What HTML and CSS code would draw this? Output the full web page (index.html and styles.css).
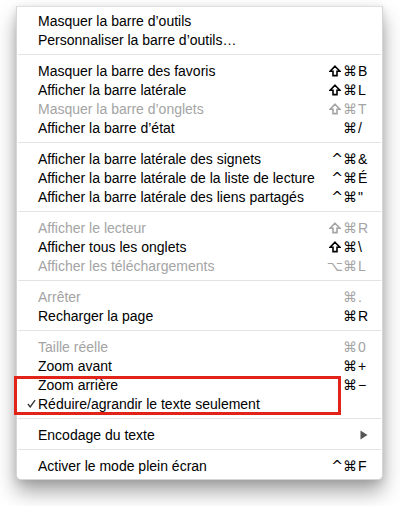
FILE: index.html
```html
<!DOCTYPE html>
<html lang="fr">
<head>
    <meta charset="UTF-8">
    <meta name="viewport" content="width=device-width, initial-scale=1.0">
    <title>Présentation</title>
    <link rel="stylesheet" href="styles.css">
</head>
<body>

<div class="menu">
    <div class="item"><span class="label">Masquer la barre d’outils</span></div>
    <div class="item"><span class="label">Personnaliser la barre d’outils…</span></div>
    <div class="sep"></div>

    <div class="item"><span class="label">Masquer la barre des favoris</span><span class="keys"><svg class="shift" viewBox="0 0 12 12"><path d="M6 1.2 L10.8 6.2 H8 V10.6 H4 V6.2 H1.2 Z"/></svg><span class="mods">⌘</span><span class="key">B</span></span></div>
    <div class="item"><span class="label">Afficher la barre latérale</span><span class="keys"><svg class="shift" viewBox="0 0 12 12"><path d="M6 1.2 L10.8 6.2 H8 V10.6 H4 V6.2 H1.2 Z"/></svg><span class="mods">⌘</span><span class="key">L</span></span></div>
    <div class="item off"><span class="label">Masquer la barre d’onglets</span><span class="keys"><svg class="shift" viewBox="0 0 12 12"><path d="M6 1.2 L10.8 6.2 H8 V10.6 H4 V6.2 H1.2 Z"/></svg><span class="mods">⌘</span><span class="key">T</span></span></div>
    <div class="item"><span class="label">Afficher la barre d’état</span><span class="keys"><span class="mods">⌘</span><span class="key">/</span></span></div>
    <div class="sep"></div>

    <div class="item"><span class="label">Afficher la barre latérale des signets</span><span class="keys"><span class="mods">^⌘</span><span class="key">&amp;</span></span></div>
    <div class="item"><span class="label">Afficher la barre latérale de la liste de lecture</span><span class="keys"><span class="mods">^⌘</span><span class="key">É</span></span></div>
    <div class="item"><span class="label">Afficher la barre latérale des liens partagés</span><span class="keys"><span class="mods">^⌘</span><span class="key">"</span></span></div>
    <div class="sep"></div>

    <div class="item off"><span class="label">Afficher le lecteur</span><span class="keys"><svg class="shift" viewBox="0 0 12 12"><path d="M6 1.2 L10.8 6.2 H8 V10.6 H4 V6.2 H1.2 Z"/></svg><span class="mods">⌘</span><span class="key">R</span></span></div>
    <div class="item"><span class="label">Afficher tous les onglets</span><span class="keys"><svg class="shift" viewBox="0 0 12 12"><path d="M6 1.2 L10.8 6.2 H8 V10.6 H4 V6.2 H1.2 Z"/></svg><span class="mods">⌘</span><span class="key">\</span></span></div>
    <div class="item off"><span class="label">Afficher les téléchargements</span><span class="keys"><span class="mods">⌥⌘</span><span class="key">L</span></span></div>
    <div class="sep"></div>

    <div class="item off"><span class="label">Arrêter</span><span class="keys"><span class="mods">⌘</span><span class="key">.</span></span></div>
    <div class="item"><span class="label">Recharger la page</span><span class="keys"><span class="mods">⌘</span><span class="key">R</span></span></div>
    <div class="sep"></div>

    <div class="item off"><span class="label">Taille réelle</span><span class="keys"><span class="mods">⌘</span><span class="key">0</span></span></div>
    <div class="item"><span class="label">Zoom avant</span><span class="keys"><span class="mods">⌘</span><span class="key">+</span></span></div>
    <div class="item"><span class="label">Zoom arrière</span><span class="keys"><span class="mods">⌘</span><span class="key">−</span></span></div>
    <div class="item"><svg class="check" viewBox="0 0 10 10"><path d="M1 5.6 L3.6 8.8 L9 1.2"/></svg><span class="label">Réduire/agrandir le texte seulement</span></div>
    <div class="sep"></div>

    <div class="item"><span class="label">Encodage du texte</span><svg class="arrow" viewBox="0 0 8 10"><path d="M0.5 0.5 L7.5 5 L0.5 9.5 Z"/></svg></div>
    <div class="sep"></div>

    <div class="item"><span class="label">Activer le mode plein écran</span><span class="keys"><span class="mods">^⌘</span><span class="key">F</span></span></div>

    <div class="highlight"></div>
</div>

</body>
</html>
```

FILE: styles.css
```css
html, body {
    height: 100%;
}
body {
    font-family: "Liberation Sans", Arial, "DejaVu Sans", sans-serif;
    background-color: white;
    color: black;
    margin: 0px;
    padding: 0px;
    overflow: hidden;
}
div.menu {
    position: relative;
    width: 365px;
    margin: 6px 0 0 16px;
    padding: 4px 0 4px 0;
    background-color: white;
    border: 1px solid #d6d6d6;
    border-top-color: #e0e0e0;
    border-radius: 0 0 5px 5px;
    box-shadow: 0 12px 20px rgba(0, 0, 0, 0.35), 0 2px 8px rgba(0, 0, 0, 0.12);
}
div.item {
    position: relative;
    display: flex;
    align-items: center;
    height: 19px;
    padding: 0 13px 0 21px;
    font-size: 14px;
    white-space: nowrap;
}
div.item.off {
    color: #a4a4a4;
}
.label {
    flex: 1;
}
.keys {
    display: flex;
    align-items: center;
    font-family: "DejaVu Sans", sans-serif;
    font-size: 14px;
}
.shift {
    width: 12px;
    height: 12px;
    margin-right: 2px;
    fill: none;
    stroke: currentColor;
    stroke-width: 1.6;
    stroke-linejoin: miter;
}
.mods {
    text-align: right;
}
.key {
    width: 11px;
    padding-left: 1px;
    font-family: "Liberation Sans", Arial, sans-serif;
    font-size: 14px;
}
.check {
    position: absolute;
    left: 10px;
    top: 5px;
    width: 9px;
    height: 9px;
    fill: none;
    stroke: #333;
    stroke-width: 1.5;
}
.arrow {
    width: 8px;
    height: 10px;
    margin-right: 1px;
    fill: #555;
}
div.sep {
    height: 1px;
    margin: 5px 1px 6px 1px;
    background-color: #e3e3e3;
}
div.highlight {
    position: absolute;
    left: -3px;
    top: 369px;
    width: 321px;
    height: 33px;
    border: 3px solid #e2231a;
}
```
